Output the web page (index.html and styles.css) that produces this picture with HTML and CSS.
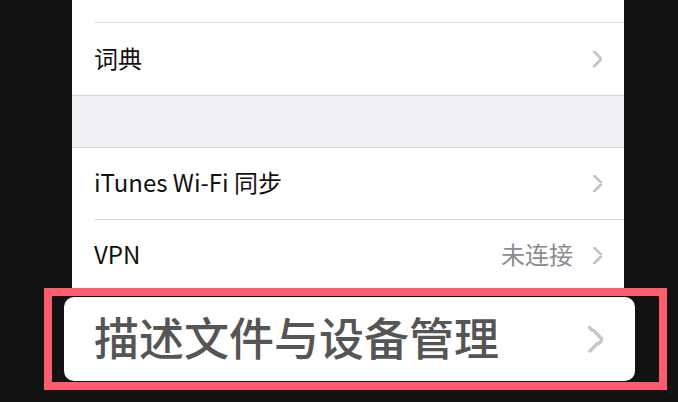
FILE: index.html
```html
<!DOCTYPE html>
<html lang="zh-CN">
<head>
    <meta charset="UTF-8">
    <meta name="viewport" content="width=device-width, initial-scale=1.0">
    <title>通用</title>
    <link rel="stylesheet" href="styles.css">
</head>
<body>
    <div class="phone">
        <div class="group">
            <div class="row">
                <div class="row-body">
                    <span class="label">语言与地区</span>
                    <span class="chevron"></span>
                </div>
            </div>
            <div class="row">
                <div class="row-body">
                    <span class="label">词典</span>
                    <span class="chevron"></span>
                </div>
            </div>
        </div>

        <div class="gap"></div>

        <div class="group group-top">
            <div class="row">
                <div class="row-body short">
                    <span class="label">iTunes Wi-Fi 同步</span>
                    <span class="chevron"></span>
                </div>
            </div>
            <div class="row">
                <div class="row-body short">
                    <span class="label">VPN</span>
                    <span class="detail">未连接</span>
                    <span class="chevron"></span>
                </div>
            </div>
        </div>

        <div class="gap gap-end"></div>
    </div>

    <!-- highlighted, zoomed profile row -->
    <div class="highlight">
        <div class="highlight-card">
            <span class="highlight-label">描述文件与设备管理</span>
            <span class="chevron chevron-big"></span>
        </div>
    </div>
</body>
</html>
```

FILE: styles.css
```css
html, body {
    height: 100%;
    margin: 0;
    overflow: hidden; /* screenshot crop */
}
body {
    background-color: #121212;
    font-family: "Noto Sans CJK SC", "Noto Sans", sans-serif;
    position: relative;
}
.phone {
    width: 552px;
    margin-left: 72px;
    margin-top: -50px;
    background-color: #efeff4;
    border-radius: 0 0 8px 8px;
    overflow: hidden;
}
.group {
    background-color: #fff;
    border-bottom: 1px solid #d6d6da;
}
.group-top {
    border-top: 1px solid #d6d6da;
}
.gap {
    height: 51px;
}
.gap-end {
    height: 30px;
}
.row {
    padding-left: 22px;
}
.row-body {
    display: flex;
    align-items: center;
    height: 72px;
    padding-right: 22px;
    border-bottom: 1px solid #dedee2;
}
.row-body.short {
    height: 71px;
}
.row:last-child .row-body {
    border-bottom: none;
}
.label {
    flex: 1;
    font-size: 24px;
    color: #111;
    margin-bottom: 4px;
}
.detail {
    font-size: 24px;
    color: #8b8b90;
    margin-right: 20px;
    margin-bottom: 4px;
}
.chevron {
    width: 9px;
    height: 17px;
    background:
        linear-gradient(to top right, transparent calc(50% - 1.4px), #c6c6ca calc(50% - 1.4px), #c6c6ca calc(50% + 1.4px), transparent calc(50% + 1.4px)) top / 100% 50% no-repeat,
        linear-gradient(to bottom right, transparent calc(50% - 1.4px), #c6c6ca calc(50% - 1.4px), #c6c6ca calc(50% + 1.4px), transparent calc(50% + 1.4px)) bottom / 100% 50% no-repeat;
}
.chevron-big {
    width: 15px;
    height: 27px;
    background:
        linear-gradient(to top right, transparent calc(50% - 1.8px), #c8c8cc calc(50% - 1.8px), #c8c8cc calc(50% + 1.8px), transparent calc(50% + 1.8px)) top / 100% 50% no-repeat,
        linear-gradient(to bottom right, transparent calc(50% - 1.8px), #c8c8cc calc(50% - 1.8px), #c8c8cc calc(50% + 1.8px), transparent calc(50% + 1.8px)) bottom / 100% 50% no-repeat;
}
.highlight {
    position: absolute;
    left: 44px;
    top: 288px;
    width: 595px;
    height: 85px;
    border: 8px solid #fc5c6c;
    background-color: #121212;
    padding: 1px 0 0 12px;
}
.highlight-card {
    display: flex;
    align-items: center;
    width: 571px;
    height: 84px;
    box-sizing: border-box;
    padding: 0 32px 0 30px;
    background-color: #fff;
    border-radius: 10px;
}
.highlight-label {
    flex: 1;
    font-size: 45px;
    font-weight: 500;
    color: #555;
    margin-bottom: 6px;
}
```
